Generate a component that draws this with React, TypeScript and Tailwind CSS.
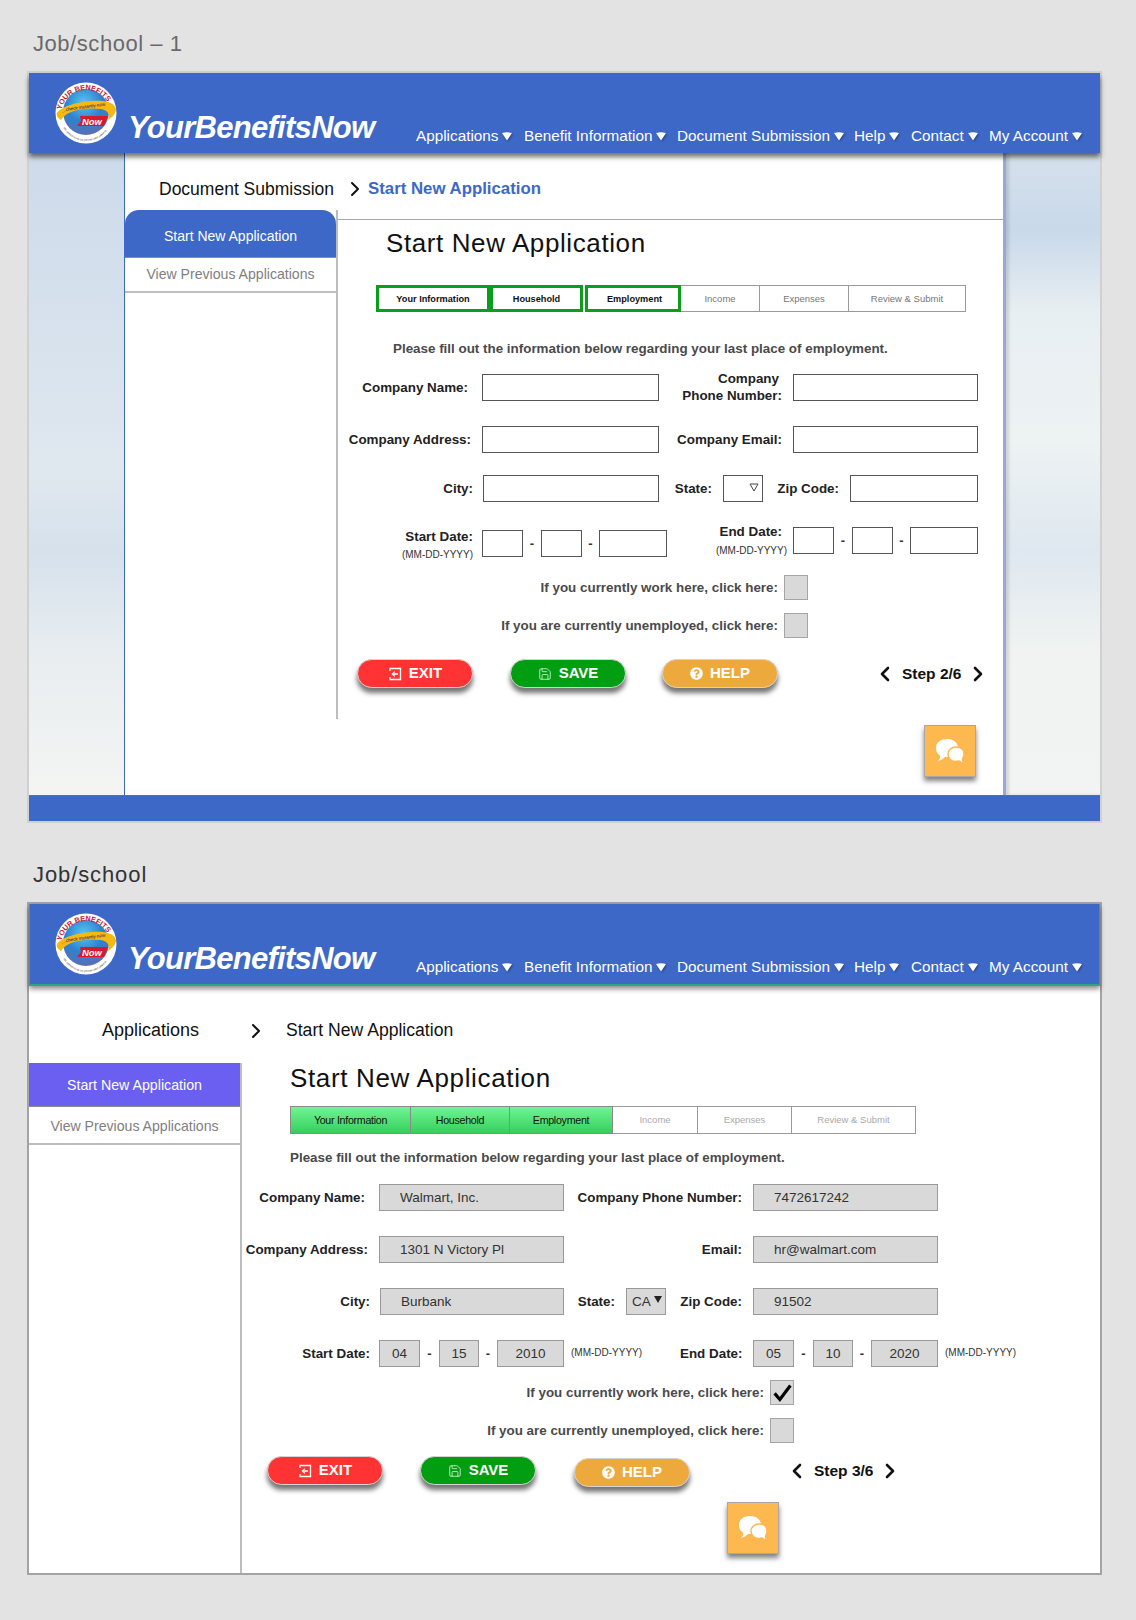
import React from "react";
import { ChevronLeft, ChevronRight, Save } from "lucide-react";
import { FaQuestionCircle } from "react-icons/fa";

function Logo({ id }: { id: string }) {
  return (
    <svg width="62" height="64" viewBox="0 0 62 64" className="shrink-0 overflow-visible">
      <defs>
        <radialGradient id={`${id}g`} cx="0.45" cy="0.3" r="0.8">
          <stop offset="0" stopColor="#5cc4f0" />
          <stop offset="0.5" stopColor="#2b83d0" />
          <stop offset="0.85" stopColor="#5a6fb5" />
          <stop offset="1" stopColor="#c8a0c0" />
        </radialGradient>
        <path id={`${id}t`} d="M6 34 A25 25 0 0 1 56 34" fill="none" />
        <path id={`${id}b`} d="M8 46 A26 26 0 0 0 54 46" fill="none" />
      </defs>
      <circle cx="31" cy="32" r="30.5" fill="#fff" />
      <circle cx="31" cy="31" r="23" fill={`url(#${id}g)`} />
      <text fontSize="7.3" fontWeight="700" fill="#c5162e" fontFamily="'Liberation Sans', sans-serif">
        <textPath href={`#${id}t`} startOffset="5">YOUR BENEFITS</textPath>
      </text>
      <path d="M2 32 C8 24 30 19 48 20 C56 21 61 24 61 29 C60 34 56 37 53 39 C55 34 54 30 46 28 C30 26 12 29 6 39 C3 37 1 35 2 32 Z" fill="#f6b90f" />
      <path d="M7 32 C14 27 30 24 46 25" fill="none" stroke="#ee8a12" strokeWidth="0.8" />
      <text x="11" y="30" fontSize="4.6" fill="#1e2a66" transform="rotate(-8 11 30)" fontFamily="'Liberation Sans', sans-serif">check instantly now</text>
      <path d="M25 35 L53 35 L49 45 L22 45 L26 40 Z" fill="#d9182d" />
      <text x="27" y="43.5" fontSize="9.4" fontWeight="700" fontStyle="italic" fill="#fff" fontFamily="'Liberation Sans', sans-serif">Now</text>
      <text fontSize="2.6" fill="#333" fontFamily="'Liberation Sans', sans-serif">
        <textPath href={`#${id}b`} startOffset="1">ebt calfresh medi-cal general relief calworks</textPath>
      </text>
    </svg>
  );
}

function NavItem({ label, w }: { label: string; w: string }) {
  return (
    <div className={`flex items-center gap-[3px] ${w}`}>
      <span className="whitespace-nowrap">{label}</span>
      <svg width="12" height="10" viewBox="0 0 12 10" className="drop-shadow-[1px_1px_1px_rgba(0,0,0,0.35)]">
        <path d="M1 2 Q6 0.5 11 2 L6 9.5 Z" fill="#fff" />
      </svg>
    </div>
  );
}

function Header({ id, className }: { id: string; className: string }) {
  return (
    <header className={`relative z-10 flex bg-[#3d68c7] pt-[8px] text-white ${className}`}>
      <Logo id={id} />
      <div className="ml-[11px] mt-[28px] h-[38px] w-[288px] whitespace-nowrap text-[31px] font-bold italic leading-[38px] tracking-[-0.72px]">YourBenefitsNow</div>
      <nav className="mt-[46px] flex h-[18px] text-[15.3px] leading-[18px]">
        <NavItem label="Applications" w="w-[108px]" />
        <NavItem label="Benefit Information" w="w-[153px]" />
        <NavItem label="Document Submission" w="w-[177px]" />
        <NavItem label="Help" w="w-[57px]" />
        <NavItem label="Contact" w="w-[78px]" />
        <NavItem label="My Account" w="w-[100px]" />
      </nav>
    </header>
  );
}

function Label({ children, className = "" }: { children: React.ReactNode; className?: string }) {
  return <div className={`shrink-0 whitespace-nowrap text-right text-[13.4px] font-bold leading-[17px] text-[#222] ${className}`}>{children}</div>;
}

function Box({ children, className = "", filled }: { children?: React.ReactNode; className?: string; filled?: boolean }) {
  return (
    <div
      className={`h-[27px] shrink-0 border text-[13.5px] leading-[25px] text-[#333] ${
        filled ? "border-[#9a9a9a] bg-[#d9d9d9]" : "border-[#555] bg-white"
      } ${className}`}
    >
      {children}
    </div>
  );
}

function Dash({ className }: { className: string }) {
  return <div className={`shrink-0 text-center text-[13px] font-bold leading-[27px] text-[#333] ${className}`}>-</div>;
}

function Check({ label, w, checked }: { label: string; w: string; checked?: boolean }) {
  return (
    <div className={`flex h-[25px] items-center justify-end gap-[6px] ${w}`}>
      <span className="pt-[2px] text-[13.4px] font-bold text-[#4a4a4a]">{label}</span>
      <div className="relative h-[25px] w-[24px] border border-[#a5a5a5] bg-[#d9d9d9]">
        {checked && (
          <svg viewBox="0 0 24 24" className="absolute left-[1px] top-[1px] h-[21px] w-[21px]">
            <path d="M3 13 L9 20 L21 4" fill="none" stroke="#000" strokeWidth="3.6" />
          </svg>
        )}
      </div>
    </div>
  );
}

function Pill({ className, children }: { className: string; children: React.ReactNode }) {
  return (
    <div
      className={`flex h-[29px] w-[116px] shrink-0 items-center justify-center gap-[7px] rounded-full border border-[#d4d4d4] text-[15px] font-bold text-white shadow-[0_5px_5px_rgba(0,0,0,0.55)] ${className}`}
    >
      {children}
    </div>
  );
}

function ExitIcon() {
  return (
    <svg width="14" height="14" viewBox="0 0 14 14" fill="none" stroke="#fff" strokeWidth="1.3">
      <path d="M2 4 V1.5 H12.5 V12.5 H2 V10" />
      <path d="M10 7 H4.5 M6.8 4.6 L4.4 7 L6.8 9.4" />
    </svg>
  );
}

function Buttons({ step, stepGap, helpOffset }: { step: string; stepGap: string; helpOffset: string }) {
  return (
    <>
      <Pill className="bg-[#ff3333]"><ExitIcon />EXIT</Pill>
      <Pill className="ml-[37px] bg-[#029e12]"><Save size={14} strokeWidth={1.5} className="text-[#cfeed2]" />SAVE</Pill>
      <Pill className={`bg-[#eea93c] ${helpOffset}`}><FaQuestionCircle size={13} />HELP</Pill>
      <div className={`flex items-center text-[15.5px] font-bold text-[#111] ${stepGap}`}>
        <ChevronLeft size={24} strokeWidth={2.6} />
        <span className="mx-[5px]">{step}</span>
        <ChevronRight size={24} strokeWidth={2.6} />
      </div>
    </>
  );
}

function Chat({ className }: { className: string }) {
  return (
    <div className={`flex h-[52px] w-[52px] items-center justify-center border border-[#a8a8a8] bg-[#fdb94f] shadow-[0_4px_5px_rgba(0,0,0,0.5)] ${className}`}>
      <svg width="30" height="26" viewBox="0 0 30 26">
        <path d="M12 1 C19 1 23 5 23 10 C23 15 19 19 12 19 L10 19 C8 21 6 22 3 23 C5 21 5.5 19 5 17.5 C2 15.5 1 13 1 10 C1 5 5 1 12 1 Z" fill="#fff" />
        <path d="M21 9 C26 9 29 12 29 16 C29 18.5 28 20 27.5 21 C27.5 22.5 28 24 29 25.5 C27 25 25 24 24 23 C23 23.3 22 23.5 21 23.5 C16.5 23.5 13 20.5 13 16 C13 12 16.5 9 21 9 Z" fill="#fff" stroke="#fdb94f" strokeWidth="1.5" />
      </svg>
    </div>
  );
}

function Sub({ className = "" }: { className?: string }) {
  return <div className={`shrink-0 whitespace-nowrap text-[10px] leading-[12px] text-[#333] ${className}`}>(MM-DD-YYYY)</div>;
}

const Title = ({ children, className }: { children: React.ReactNode; className: string }) => (
  <div className={`pl-[33px] text-[22px] leading-[28px] ${className}`}>{children}</div>
);

function FrameOne() {
  const on = "border-[3px] border-[#0a9f1a] text-[9.2px] font-bold text-[#111]";
  const off = "border border-l-0 border-[#9a9a9a] text-[9.5px] text-[#777]";
  return (
    <section className="ml-[27px] mt-[13px] flex h-[752px] w-[1075px] flex-col border-2 border-[#d0d0d0]">
      <Header id="a" className="h-[80px] pl-[26px] shadow-[0_4px_5px_rgba(0,0,0,0.55)]" />
      <div className="flex h-[642px]">
        <div className="w-[95px] bg-[linear-gradient(180deg,#cddaea_0%,#d6e1ed_25%,#e0e8ef_50%,#d6e1ec_62%,#e8edf0_78%,#f4f5f3_100%)]" />
        <div className="flex w-[882px] flex-col border-l border-r-[3px] border-l-[#3d68c7] border-r-[#98a9d2] bg-white">
          <div className="flex h-[57px] items-center pl-[34px] pt-[15px] text-[#111]">
            <span className="text-[17.5px]">Document Submission</span>
            <ChevronRight size={24} strokeWidth={2} className="ml-[9px]" />
            <span className="ml-[1px] text-[16.8px] font-semibold text-[#3d68c7]">Start New Application</span>
          </div>
          <div className="flex flex-1">
            <aside className="h-[509px] w-[213px] shrink-0 border-r-2 border-[#bdbdbd]">
              <div className="flex h-[48px] items-center justify-center rounded-t-[14px] border-b border-[#8e8e8e] bg-[#3d68c7] pt-[5px] text-[14px] text-white">Start New Application</div>
              <div className="flex h-[35px] items-center justify-center border-b-2 border-[#bdbdbd] text-[14.1px] text-[#808080]">View Previous Applications</div>
            </aside>
            <main className="flex-1">
              <div className="mt-[9px] border-t border-[#a8a8a8]" />
              <h1 className="ml-[48px] mt-[8px] h-[30px] text-[26px] leading-[30px] tracking-[0.6px] text-[#111]">Start New Application</h1>
              <div className="ml-[38px] mt-[27px] flex h-[27px] w-[590px] text-center leading-[22px]">
                <div className={`w-[114px] ${on}`}>Your Information</div>
                <div className={`w-[93px] ${on}`}>Household</div>
                <div className={`ml-[2px] w-[96px] pl-[3px] ${on}`}>Employment</div>
                <div className={`w-[79px] leading-[25px] ${off}`}>Income</div>
                <div className={`w-[89px] leading-[25px] ${off}`}>Expenses</div>
                <div className={`w-[117px] leading-[25px] ${off}`}>Review &amp; Submit</div>
              </div>
              <p className="ml-[55px] mt-[27px] h-[20px] text-[13.4px] font-bold leading-[20px] text-[#4a4a4a]">Please fill out the information below regarding your last place of employment.</p>
              <div className="mt-[14px] flex h-[28px] items-center">
                <Label className="w-[130px]">Company Name:</Label>
                <Box className="ml-[14px] w-[177px]" />
                <Label className="w-[123px]"><span className="pr-[3px]">Company</span><br />Phone Number:</Label>
                <Box className="ml-[11px] w-[185px]" />
              </div>
              <div className="mt-[24px] flex h-[28px] items-center">
                <Label className="w-[133px]">Company Address:</Label>
                <Box className="ml-[11px] w-[177px]" />
                <Label className="w-[123px]">Company Email:</Label>
                <Box className="ml-[11px] w-[185px]" />
              </div>
              <div className="mt-[21px] flex h-[28px] items-center">
                <Label className="w-[135px]">City:</Label>
                <Box className="ml-[10px] w-[176px]" />
                <Label className="ml-[15px] w-[38px]">State:</Label>
                <Box className="relative ml-[11px] w-[40px]">
                  <svg width="10" height="9" viewBox="0 0 10 9" className="absolute right-[3px] top-[7px]"><path d="M1 1 H9 L5 8 Z" fill="none" stroke="#444" /></svg>
                </Box>
                <Label className="ml-[14px] w-[62px]">Zip Code:</Label>
                <Box className="ml-[11px] w-[128px]" />
              </div>
              <div className="mt-[13px] flex h-[46px]">
                <div className="w-[135px] shrink-0 pt-[13px] text-right">
                  <Label>Start Date:</Label>
                  <Sub className="mt-[4px]" />
                </div>
                <Box className="ml-[9px] mt-[15px] w-[41px]" />
                <Dash className="mt-[15px] w-[18px]" />
                <Box className="mt-[15px] w-[41px]" />
                <Dash className="mt-[15px] w-[17px]" />
                <Box className="mt-[15px] w-[68px]" />
                <div className="ml-[34px] w-[92px] shrink-0 pt-[8px] text-right">
                  <Label className="pr-[11px]">End Date:</Label>
                  <Sub className="mt-[5px] pr-[6px]" />
                </div>
                <Box className="mt-[12px] w-[41px]" />
                <Dash className="mt-[12px] w-[18px]" />
                <Box className="mt-[12px] w-[41px]" />
                <Dash className="mt-[12px] w-[17px]" />
                <Box className="mt-[12px] w-[68px]" />
              </div>
              <div className="mt-[14px]"><Check label="If you currently work here, click here:" w="w-[470px]" /></div>
              <div className="mt-[13px]"><Check label="If you are currently unemployed, click here:" w="w-[470px]" /></div>
              <div className="ml-[19px] mt-[21px] flex h-[30px]">
                <Buttons step="Step 2/6" stepGap="ml-[95px]" helpOffset="ml-[36px]" />
              </div>
              <Chat className="ml-[586px] mt-[36px]" />
            </main>
          </div>
        </div>
        <div className="flex-1 bg-[linear-gradient(180deg,#d5e0ec_0%,#c9d9ea_12%,#e8eff2_25%,#edf2f3_45%,#dfe8f0_62%,#f0f3f1_78%,#f1f4f3_100%)] shadow-[inset_3px_0_3px_rgba(0,0,0,0.12)]" />
      </div>
      <div className="flex-1 border-t border-[#6d6d6d] bg-[#3d68c7]" />
    </section>
  );
}

function FrameTwo() {
  const on = "border border-[#8a8a8a] bg-[linear-gradient(180deg,#70f592,#35cf5f)] text-[10.7px] leading-[26px] tracking-[-0.3px] text-[#111]";
  const off = "border border-l-0 border-[#9a9a9a] text-[9.5px] leading-[26px] text-[#aaa]";
  const val = "pl-[20px]";
  return (
    <section className="ml-[27px] mt-[13px] flex h-[673px] w-[1075px] flex-col border-2 border-[#a4a4a4] bg-white">
      <Header id="b" className="h-[82px] border-x border-b-2 border-[#2ea57f] pl-[25px] shadow-[0_3px_5px_rgba(0,0,0,0.45)]" />
      <div className="flex h-[77px] items-center pt-[12px] text-[#111]">
        <span className="ml-[73px] w-[142px] text-[18px]">Applications</span>
        <ChevronRight size={24} strokeWidth={2} />
        <span className="ml-[18px] text-[17.6px]">Start New Application</span>
      </div>
      <div className="flex flex-1">
        <aside className="w-[213px] shrink-0 border-r-2 border-[#bdbdbd]">
          <div className="flex h-[44px] items-center justify-center border-b border-[#8e8e8e] bg-[#6a5ff0] pt-[3px] text-[14.2px] text-white">Start New Application</div>
          <div className="flex h-[38px] items-center justify-center border-b-2 border-[#bdbdbd] pt-[3px] text-[14.1px] text-[#808080]">View Previous Applications</div>
        </aside>
        <main className="flex-1">
          <h1 className="ml-[48px] h-[30px] text-[26px] leading-[30px] tracking-[0.65px] text-[#111]">Start New Application</h1>
          <div className="ml-[48px] mt-[13px] flex h-[28px] text-center">
            <div className={`w-[121px] ${on}`}>Your Information</div>
            <div className={`w-[99px] border-l-0 ${on}`}>Household</div>
            <div className={`w-[103px] border-l-0 ${on}`}>Employment</div>
            <div className={`w-[85px] ${off}`}>Income</div>
            <div className={`w-[94px] ${off}`}>Expenses</div>
            <div className={`w-[124px] ${off}`}>Review &amp; Submit</div>
          </div>
          <p className="ml-[48px] mt-[14px] h-[20px] text-[13.4px] font-bold leading-[20px] text-[#4a4a4a]">Please fill out the information below regarding your last place of employment.</p>
          <div className="mt-[15px] flex h-[28px] items-center">
            <Label className="w-[123px]">Company Name:</Label>
            <Box filled className={`ml-[14px] w-[185px] ${val}`}>Walmart, Inc.</Box>
            <Label className="w-[178px]">Company Phone Number:</Label>
            <Box filled className={`ml-[11px] w-[185px] ${val}`}>7472617242</Box>
          </div>
          <div className="mt-[24px] flex h-[28px] items-center">
            <Label className="w-[126px]">Company Address:</Label>
            <Box filled className={`ml-[11px] w-[185px] ${val}`}>1301 N Victory Pl</Box>
            <Label className="w-[178px]">Email:</Label>
            <Box filled className={`ml-[11px] w-[185px] ${val}`}>hr@walmart.com</Box>
          </div>
          <div className="mt-[24px] flex h-[28px] items-center">
            <Label className="w-[128px]">City:</Label>
            <Box filled className={`ml-[10px] w-[184px] ${val}`}>Burbank</Box>
            <Label className="ml-[13px] w-[38px]">State:</Label>
            <Box filled className="relative ml-[11px] w-[40px] pl-[5px]">
              CA
              <svg width="8" height="7" viewBox="0 0 8 7" className="absolute right-[3px] top-[7px]"><path d="M0 0 H8 L4 7 Z" fill="#222" /></svg>
            </Box>
            <Label className="ml-[14px] w-[62px]">Zip Code:</Label>
            <Box filled className={`ml-[11px] w-[185px] ${val}`}>91502</Box>
          </div>
          <div className="mt-[24px] flex h-[28px] items-center">
            <Label className="w-[128px]">Start Date:</Label>
            <Box filled className="ml-[9px] w-[41px] text-center">04</Box>
            <Dash className="w-[19px]" />
            <Box filled className="w-[40px] text-center">15</Box>
            <Dash className="w-[18px]" />
            <Box filled className="w-[67px] text-center">2010</Box>
            <Sub className="ml-[7px] w-[109px]" />
            <Label className="w-[62px]">End Date:</Label>
            <Box filled className="ml-[11px] w-[41px] text-center">05</Box>
            <Dash className="w-[19px]" />
            <Box filled className="w-[40px] text-center">10</Box>
            <Dash className="w-[18px]" />
            <Box filled className="w-[67px] text-center">2020</Box>
            <Sub className="ml-[7px]" />
          </div>
          <div className="mt-[13px]"><Check label="If you currently work here, click here:" w="w-[552px]" checked /></div>
          <div className="mt-[13px]"><Check label="If you are currently unemployed, click here:" w="w-[552px]" /></div>
          <div className="ml-[25px] mt-[13px] flex h-[31px] items-start">
            <Buttons step="Step 3/6" stepGap="ml-[95px] mt-[3px]" helpOffset="ml-[38px] mt-[2px]" />
          </div>
          <Chat className="ml-[485px] mt-[15px]" />
        </main>
      </div>
    </section>
  );
}

export default function App() {
  return (
    <div className="h-[1620px] w-[1136px] overflow-hidden bg-[#e3e3e3] pt-[30px] font-['Liberation_Sans',Arial,sans-serif]">
      <Title className="tracking-[0.55px] text-[#6a6a6a]">Job/school – 1</Title>
      <FrameOne />
      <div className="h-[38px]" />
      <Title className="tracking-[0.9px] text-[#333]">Job/school</Title>
      <FrameTwo />
    </div>
  );
}
